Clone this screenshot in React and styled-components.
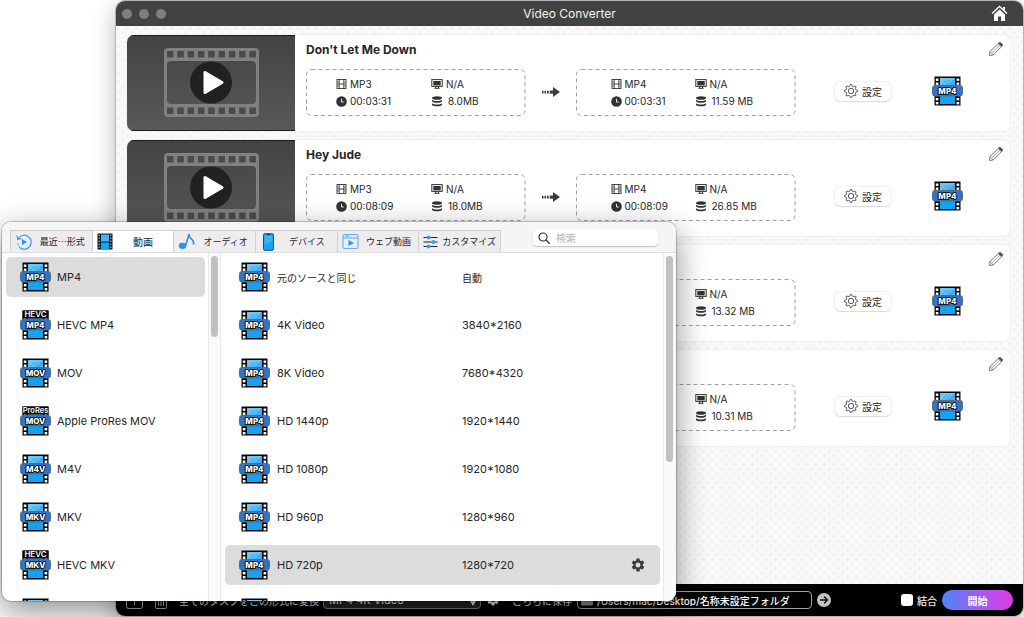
import React, {useState} from 'react';
import styled, {createGlobalStyle, css} from 'styled-components';
import {MdSettings} from 'react-icons/md';

const GlobalStyle = createGlobalStyle`
    * {
        box-sizing: border-box;
    }
    body {
        margin: 0;
        background-color: #fff;
        color: #262626;
        font-family: Inter, "Noto Sans CJK JP", sans-serif;
        font-size: 11px;
        overflow: hidden;
    }
    button, input, select {
        font-family: inherit;
        color: inherit;
        margin: 0;
        padding: 0;
        border: 0;
        background: none;
    }
    svg {
        display: block;
        flex: none;
    }
`;

const Page = styled.div`
    position: relative;
    display: flex;
    height: 100vh;
    padding: 1px 1px 1px 116px;
`;

const Window = styled.main`
    flex: 1;
    min-width: 0;
    display: flex;
    flex-direction: column;
    border-radius: 9px;
    overflow: hidden;
    box-shadow: 0 0 0 1px #b4b4b4, 0 8px 24px rgba(0, 0, 0, .3);
`;

const TitleBar = styled.header`
    height: 25px;
    flex: none;
    display: grid;
    grid-template-columns: 1fr auto 1fr;
    align-items: center;
    padding: 0 6px;
    background-color: #424242;
    color: #f2f2f2;
    h1 {
        margin: 0;
        font-size: 12px;
        font-weight: 400;
    }
`;

const Lights = styled.div`
    display: flex;
    gap: 7px;
    span {
        width: 10px;
        height: 10px;
        border-radius: 50%;
        background-color: #7e7e7e;
    }
`;

const HomeButton = styled.button`
    justify-self: end;
    margin-right: 9px;
`;

const TaskList = styled.section`
    flex: 1;
    min-height: 0;
    overflow: hidden;
    display: flex;
    flex-direction: column;
    gap: 9px;
    padding: 9px 13px 0 11px;
    background-color: #f9f9f9;
    background-image:
        radial-gradient(circle at 25% 25%, #f1f1f1 1px, transparent 2px),
        radial-gradient(circle at 75% 75%, #f1f1f1 1px, transparent 2px);
    background-size: 9px 9px;
`;

const Card = styled.article`
    flex: none;
    height: 96px;
    display: flex;
    border-radius: 7px;
    overflow: hidden;
    background-color: #fff;
    box-shadow: 0 0 0 1px #f0f0f0;
`;

const Info = styled.div`
    flex: 1;
    min-width: 0;
    padding: 7px 0 0 11px;
    h2 {
        margin: 0 0 11px;
        height: 16px;
        line-height: 16px;
        font-size: 12px;
        font-weight: 700;
    }
`;

const Conversion = styled.div`
    display: flex;
    align-items: center;
    gap: 15px;
`;

const MediaBox = styled.div`
    position: relative;
    flex: 1 1 200px;
    height: 47px;
    display: grid;
    grid-template-columns: ${({$target}) => $target ? '84px 1fr' : '95px 1fr'};
    grid-template-rows: 17px 17px;
    align-content: center;
    padding-left: ${({$target}) => $target ? '35px' : '30px'};
    font-size: 10px;
`;

const DashFrame = styled.svg`
    position: absolute;
    left: 0;
    top: 0;
    width: calc(100% - 1px);
    height: 100%;
    overflow: visible;
`;

const Fact = styled.span`
    display: flex;
    align-items: center;
    gap: ${({$wide}) => $wide ? '5px' : '3px'};
    white-space: nowrap;
`;

const Actions = styled.div`
    display: grid;
    grid-template-columns: 56px 31px 18px;
    column-gap: 41px;
    align-items: center;
    padding: 16px 0 0 40px;
    width: 215px;
`;

const SettingsButton = styled.button`
    height: 19px;
    display: flex;
    align-items: center;
    justify-content: center;
    gap: 4px;
    border-radius: 5px;
    background-color: #fff;
    box-shadow: 0 0 2px rgba(0, 0, 0, .2), 0 1px 1px rgba(0, 0, 0, .1);
    font-size: 10px;
`;

const EditColumn = styled.div`
    display: flex;
    align-items: flex-start;
    width: 22px;
    margin-left: -22px;
    padding-top: 6px;
`;

const Footer = styled.footer`
    height: 32px;
    flex: none;
    display: flex;
    align-items: center;
    padding: 0 10px;
    background-color: #000;
    color: #e8e8e8;
    font-size: 10px;
    white-space: nowrap;
`;

const FooterIcon = styled.button`
    margin-right: 12px;
`;

const FormatSelect = styled.select`
    width: 158px;
    height: 17px;
    margin: 0 5px 0 4px;
    padding: 0 16px 0 5px;
    appearance: none;
    border: 1px solid #777;
    border-radius: 4px;
    background: #222 url("data:image/svg+xml,%3Csvg xmlns='http://www.w3.org/2000/svg' width='6' height='5'%3E%3Cpath d='M0 0h6L3 5z' fill='%23ddd'/%3E%3C/svg%3E") no-repeat right 4px top 8px;
    color: #eee;
    font-size: 11px;
`;

const PathBox = styled.div`
    flex: 0 1 235px;
    min-width: 60px;
    height: 18px;
    display: flex;
    align-items: center;
    gap: 4px;
    margin: 0 5px;
    padding: 0 3px;
    border: 1px solid #a5a5a5;
    border-radius: 4px;
    input {
        flex: 1;
        min-width: 0;
        outline: 0;
        color: #fff;
        font-size: 10px;
        font-weight: 500;
    }
`;

const MergeLabel = styled.label`
    display: flex;
    align-items: center;
    gap: 4px;
    margin: 0 5px 0 auto;
    font-weight: 500;
    input {
        appearance: none;
        width: 12px;
        height: 12px;
        border-radius: 3px;
        background-color: #fff;
    }
    input:checked {
        background-color: #4c8dff;
    }
`;

const StartButton = styled.button`
    width: 71px;
    height: 20px;
    border-radius: 10px;
    background-image: linear-gradient(90deg, #4a86ff, #a05cf0 50%, #e03be4);
    color: #fff;
    font-size: 10px;
    font-weight: 700;
`;

const Popup = styled.section`
    position: absolute;
    left: 2px;
    top: 222px;
    bottom: 16px;
    width: 674px;
    max-width: calc(100vw - 4px);
    display: flex;
    flex-direction: column;
    border-radius: 9px;
    overflow: hidden;
    background-color: #fff;
    box-shadow: 0 0 0 1px rgba(0, 0, 0, .2), 0 10px 32px rgba(0, 0, 0, .45);
`;

const PopupHead = styled.div`
    height: 31px;
    flex: none;
    display: flex;
    align-items: flex-end;
    justify-content: space-between;
    padding: 0 18px 0 8px;
    border-bottom: 1px solid #ddd;
    background-color: #f5f5f5;
`;

const Tabs = styled.div`
    flex: 0 1 491px;
    min-width: 0;
    display: flex;
    height: 23px;
    margin-bottom: -1px;
    border: 1px solid #d0d0d0;
    border-bottom-color: #ddd;
`;

const Tab = styled.button`
    flex: 1;
    min-width: 0;
    display: flex;
    align-items: center;
    padding-left: 4px;
    background-color: ${({$active}) => $active ? '#fff' : '#eeecee'};
    font-size: ${({$small}) => $small ? '9px' : '10px'};
    white-space: nowrap;
    & + & {
        border-left: 1px solid #d0d0d0;
    }
    span {
        flex: 1;
        text-align: center;
    }
`;

const SearchBox = styled.label`
    width: 125px;
    height: 17px;
    margin-bottom: 6px;
    display: flex;
    align-items: center;
    gap: 6px;
    padding-left: 5px;
    border-radius: 4px;
    background-color: #fff;
    box-shadow: 0 1px 1px rgba(0, 0, 0, .2), 0 0 1px rgba(0, 0, 0, .15);
    input {
        flex: 1;
        min-width: 0;
        outline: 0;
        font-size: 10px;
    }
    input::placeholder {
        color: #b5b5b5;
    }
`;

const PopupBody = styled.div`
    flex: 1;
    min-height: 0;
    display: grid;
    grid-template-columns: 206px 13px minmax(0, 1fr) 13px;
`;

const List = styled.ul`
    min-height: 0;
    margin: 0;
    padding: 4px 3px 0 4px;
    overflow: hidden;
    list-style: none;
`;

const rowBase = css`
    height: 40px;
    margin-bottom: 8px;
    align-items: center;
    border-radius: 5px;
    background-color: ${({$selected}) => $selected ? '#dcdcdc' : 'transparent'};
    text-align: left;
    font-size: 11px;
`;

const FormatRow = styled.button`
    ${rowBase}
    width: 100%;
    display: flex;
    gap: 6px;
    padding-left: 14px;
`;

const PresetRow = styled.div`
    ${rowBase}
    display: grid;
    grid-template-columns: 31px 178px 1fr 30px;
    column-gap: 7px;
    padding-left: 14px;
`;

const RowText = styled.span`
    font-size: ${({$jp}) => $jp ? '10px' : '11px'};
`;

const Track = styled.div`
    padding: 3px 3px 0 2px;
    border: solid #e8e8e8;
    border-width: 0 1px;
    background-color: #fafafa;
    &:last-child {
        border-right: 0;
    }
`;

const Thumb = styled.div`
    width: 7px;
    height: ${({$length}) => $length};
    border-radius: 4px;
    background-color: #c1c1c1;
`;

const tasks = [
    {title: "Don't Let Me Down", time: '00:03:31', from: '8.0MB', to: '11.59 MB'},
    {title: 'Hey Jude', time: '00:08:09', from: '18.0MB', to: '26.85 MB'},
    {title: '', time: '', from: '', to: '13.32 MB'},
    {title: '', time: '', from: '', to: '10.31 MB'},
];

const formats = [
    {name: 'MP4', badge: 'MP4'},
    {name: 'HEVC MP4', badge: 'MP4', top: 'HEVC'},
    {name: 'MOV', badge: 'MOV'},
    {name: 'Apple ProRes MOV', badge: 'MOV', top: 'ProRes'},
    {name: 'M4V', badge: 'M4V'},
    {name: 'MKV', badge: 'MKV'},
    {name: 'HEVC MKV', badge: 'MKV', top: 'HEVC'},
    {name: '', badge: ''},
];

const presets = [
    {name: '元のソースと同じ', size: '自動', badge: 'MP4', jp: true},
    {name: '4K Video', size: '3840*2160', badge: 'MP4'},
    {name: '8K Video', size: '7680*4320', badge: 'MP4'},
    {name: 'HD 1440p', size: '1920*1440', badge: 'MP4'},
    {name: 'HD 1080p', size: '1920*1080', badge: 'MP4'},
    {name: 'HD 960p', size: '1280*960', badge: 'MP4'},
    {name: 'HD 720p', size: '1280*720', badge: 'MP4'},
    {name: '', size: '', badge: ''},
];

const FormatIcon = ({badge, top}) => (
    <svg width="31" height="30" viewBox="0 0 31 30">
        <rect x="2.5" y="0.5" width="26" height="29" fill="#050505"/>
        {[3.8, 24.6].map(x => [2.5, 6.5, 22, 26].map(y => (
            <rect key={`${x}-${y}`} x={x} y={y} width="2.600" height="2.400" fill="#fff"/>
        )))}
        <rect x="8" y="2" width="15" height="12" fill="#3daef5"/>
        <path d="M8 2h15L11 12H8z" fill="#6cc5f8"/>
        <path d="M10 9l5-5M12.500 9.500l6-6" stroke="#2ba3ee" strokeWidth="1"/>
        <rect x="8" y="20" width="15" height="8" fill="#10a4f5"/>
        {top && <rect x="2.500" y="0.500" width="26" height="8" fill="#050505"/>}
        {top && (
            <text x="15.500" y="7" textAnchor="middle" fontSize={top.length > 4 ? 7.5 : 8}
                fontWeight="600" fill="#fff">{top}</text>
        )}
        <rect x="0.500" y="9.500" width="30" height="10.500" rx="2.500" fill="#2f74c8" stroke="#5d6a78"/>
        <text x="15.500" y="17.600" textAnchor="middle" fontSize="8" fontWeight="800" fill="#fff"
            stroke="#000" strokeWidth="1.700" strokeLinejoin="round" paintOrder="stroke">{badge}</text>
    </svg>
);

const TaskThumb = () => (
    <svg width="168" height="96" viewBox="0 0 168 96">
        <defs>
            <linearGradient id="thumb" x1="0" y1="0" x2="0" y2="1">
                <stop offset="0" stopColor="#434343"/>
                <stop offset="1" stopColor="#58595b"/>
            </linearGradient>
        </defs>
        <rect width="168" height="96" fill="url(#thumb)"/>
        <path d="M0 .5h168M0 95.500h168" stroke="#1e1e1e"/>
        <path fillRule="evenodd" fill="#808080"
            d="M41 13h87a4 4 0 0 1 4 4v61a4 4 0 0 1-4 4H41a4 4 0 0 1-4-4V17a4 4 0 0 1 4-4zM44 26a4 4 0 0 0-4 4v35a4 4 0 0 0 4 4h81a4 4 0 0 0 4-4V30a4 4 0 0 0-4-4z"/>
        {[...Array(9)].map((_, i) => (
            <g key={i} fill="#4a4a4b">
                <rect x={40 + i * 10.3} y="16" width="6.500" height="6.500"/>
                <rect x={40 + i * 10.3} y="72.500" width="6.500" height="6.500"/>
            </g>
        ))}
        <circle cx="84" cy="47.500" r="21" fill="#212122"/>
        <path d="M78 37.500v20l17-10z" fill="#fff" stroke="#fff" strokeWidth="3" strokeLinejoin="round"/>
    </svg>
);

const HomeIcon = () => (
    <svg width="17" height="17" viewBox="0 0 17 17" fill="none">
        <path d="M1 8.500L8.500 1.500 16 8.500" stroke="#fff" strokeWidth="1.400"/>
        <path d="M12 2h2v4l-2-2z" fill="#fff"/>
        <path d="M8.500 4.500L14 9.600V16h-4v-4.500H7V16H3V9.600z" fill="#fff"/>
    </svg>
);

const PencilIcon = () => (
    <svg width="16" height="16" viewBox="0 0 16 16" fill="none" stroke="#666" strokeLinejoin="round">
        <path d="M2 10.500L11 1.800l3.200 3.200L5.200 14 1.500 14.500z" fill="#fff" strokeWidth=".9"/>
        <path d="M3.600 12.200L12.500 3.400M2 10.500L5.200 14" strokeWidth=".6"/>
        <path d="M10.300 2.500L12 1l3 2.800-1.600 1.900z" fill="#4a4a4a" strokeWidth=".6"/>
    </svg>
);

const FilmIcon = () => (
    <svg width="11" height="10" viewBox="0 0 11 10" fill="none" stroke="#333">
        <rect x="1" y=".5" width="9" height="9" strokeWidth=".9"/>
        <path d="M3.200 .5v9M7.800 .5v9M3 5h5" strokeWidth=".9"/>
        <path d="M1 3h2M1 5h2M1 7h2M8 3h2M8 5h2M8 7h2" strokeWidth=".6"/>
    </svg>
);

const ClockIcon = () => (
    <svg width="11" height="11" viewBox="0 0 11 11">
        <circle cx="5.500" cy="5.500" r="5.300" fill="#333"/>
        <path d="M5.500 2.800V6h2.200" fill="none" stroke="#fff" strokeWidth=".9"/>
    </svg>
);

const MonitorIcon = () => (
    <svg width="12" height="10" viewBox="0 0 12 10">
        <rect x=".8" y=".6" width="10.400" height="6.800" fill="#fff" stroke="#333"/>
        <rect x="2.300" y="2" width="7.400" height="4.400" fill="#333"/>
        <path d="M3.500 9.300h5M4.500 7.500v1.500M7.500 7.500v1.500" stroke="#333"/>
    </svg>
);

const DiskIcon = () => (
    <svg width="12" height="11" viewBox="0 0 12 11" fill="#333">
        <ellipse cx="6" cy="2" rx="5" ry="1.800"/>
        <path d="M1 3.700c1.500 1.800 8.500 1.800 10 0v1.600c-1 2-9 2-10 0zM1 7.200c1.500 1.800 8.500 1.800 10 0v1.600c-1 2-9 2-10 0z"/>
    </svg>
);

const ArrowIcon = () => (
    <svg width="20" height="12" viewBox="0 0 20 12" fill="#3c3c3c">
        <path d="M1 3.800h1.500v2.700H1zM3.500 3.800H5v2.700H3.500zM6 3.800h1.800v2.700H6zM8.800 3.500H12V0l7 5-7 5V6.700H8.800z"/>
    </svg>
);

const gearPoints = [...Array(32)].map((_, i) => {
    const radius = i % 4 < 2 ? 6.5 : 4.9;
    const angle = (i - .5) * Math.PI / 16;
    return `${7 + radius * Math.cos(angle)},${7 + radius * Math.sin(angle)}`;
}).join(' ');

const GearIcon = () => (
    <svg width="14" height="14" viewBox="0 0 14 14" fill="none" stroke="#444" strokeWidth=".9">
        <polygon points={gearPoints} strokeLinejoin="round"/>
        <circle cx="7" cy="7" r="2.700"/>
    </svg>
);

const RecentIcon = () => (
    <svg width="18" height="18" viewBox="0 0 18 18" fill="none" stroke="#3a9ff0" strokeWidth="1.200">
        <path d="M3 6A7 7 0 1 1 5 14.800"/>
        <path d="M3 10.500a7 7 0 0 0 2 4.300" strokeDasharray="1.500 1.500"/>
        <path d="M2 2.500L2.700 6.500 6.500 5.500"/>
        <path d="M7 6v6l5-3z" fill="#1b9af5" stroke="none"/>
    </svg>
);

const VideoIcon = () => (
    <svg width="16" height="17" viewBox="0 0 16 17">
        <rect x=".5" y=".5" width="15" height="16" fill="#0a1a2a"/>
        <rect x="4" y="1.500" width="8" height="7" fill="#49b3f6"/>
        <rect x="4" y="9.500" width="8" height="6.500" fill="#12a5f5"/>
        <path d="M2.200 1.500v14M13.800 1.500v14" stroke="#9fb4c4" strokeWidth="1.200" strokeDasharray="1.400 1.600"/>
    </svg>
);

const NoteIcon = () => (
    <svg width="18" height="17" viewBox="0 0 18 17" fill="none" stroke="#2a8fe8" strokeWidth="1.600">
        <ellipse cx="4.500" cy="12.800" rx="3" ry="2.300" fill="#1d9bf5"/>
        <path d="M7.500 12.500L11 1.500c.2 3 1.600 3.800 3 5s2 2.500 1.500 5" strokeLinejoin="round"/>
    </svg>
);

const PhoneIcon = () => (
    <svg width="17" height="18" viewBox="0 0 17 18">
        <rect x="3.500" y=".7" width="10" height="16.600" rx="1.500" fill="#18a4f5" stroke="#1e4a70"/>
        <path d="M4.500 3h8v5l-8 4z" fill="#3fb0f6"/>
        <path d="M7 1.500h3" stroke="#12304a"/>
    </svg>
);

const WebIcon = () => (
    <svg width="17" height="15" viewBox="0 0 17 15" fill="none" stroke="#54a8f3">
        <rect x="1" y=".6" width="15" height="13.800" rx="1"/>
        <path d="M1 4h15M3 2.300h4"/>
        <path d="M6.500 6l5.500 3-5.500 3z" fill="#1b9af5" stroke="none"/>
    </svg>
);

const SlidersIcon = () => (
    <svg width="15" height="14" viewBox="0 0 15 14">
        <path d="M.5 2.500h14M.5 7h14M.5 11.500h14" stroke="#222" strokeWidth="1.200"/>
        <circle cx="5.500" cy="2.500" r="1.900" fill="#2aa5f5"/>
        <circle cx="10.500" cy="7" r="1.900" fill="#2aa5f5"/>
        <circle cx="5.500" cy="11.500" r="1.900" fill="#2aa5f5"/>
    </svg>
);

const SearchIcon = () => (
    <svg width="12" height="12" viewBox="0 0 12 12" fill="none" stroke="#333" strokeWidth="1.200">
        <circle cx="5" cy="5" r="4"/>
        <path d="M8 8l3.500 3.500" strokeLinecap="round"/>
    </svg>
);

const AddIcon = () => (
    <svg width="17" height="17" viewBox="0 0 17 17" fill="none" stroke="#aaa">
        <rect x=".5" y=".5" width="16" height="16" rx="2"/>
        <path d="M8.500 4v9M4 8.500h9"/>
    </svg>
);

const TrashIcon = () => (
    <svg width="12" height="17" viewBox="0 0 12 17" fill="none" stroke="#aaa">
        <path d="M.5 4h11M4 4V1.500h4V4M.5 4v11.500a1 1 0 0 0 1 1h9a1 1 0 0 0 1-1V4M3.500 7v7M6 7v7M8.500 7v7"/>
    </svg>
);

const FolderIcon = () => (
    <svg width="12" height="11" viewBox="0 0 12 11" fill="#8c8c8c">
        <path d="M1.500.5h3l1.500 1.500h4.500a1.500 1.500 0 0 1 1.500 1.500v5.500a1.500 1.500 0 0 1-1.500 1.500h-9A1.500 1.500 0 0 1 0 9V2A1.500 1.500 0 0 1 1.500.5z"/>
    </svg>
);

const GoIcon = () => (
    <svg width="14" height="14" viewBox="0 0 14 14">
        <circle cx="7" cy="7" r="7" fill="#c4c4c4"/>
        <path d="M3 7h7M7 3.500L10.500 7 7 10.500" fill="none" stroke="#111" strokeWidth="1.400"/>
    </svg>
);

const tabs = [
    {label: '最近⋯形式', icon: <RecentIcon/>, small: true},
    {label: '動画', icon: <VideoIcon/>},
    {label: 'オーディオ', icon: <NoteIcon/>, small: true},
    {label: 'デバイス', icon: <PhoneIcon/>, small: true},
    {label: 'ウェブ動画', icon: <WebIcon/>, small: true},
    {label: 'カスタマイズ', icon: <SlidersIcon/>, small: true},
];

const Media = ({format, time, size, target}) => (
    <MediaBox $target={target}>
        <DashFrame>
            <rect x=".5" y=".5" width="100%" height="46" rx="5" fill="none"
                stroke="#a0a0a0" strokeDasharray="4 3"/>
        </DashFrame>
        <Fact><FilmIcon/>{format}</Fact>
        <Fact><MonitorIcon/>N/A</Fact>
        <Fact><ClockIcon/>{time}</Fact>
        <Fact $wide><DiskIcon/>{size}</Fact>
    </MediaBox>
);

const Task = ({task}) => (
    <Card>
        <TaskThumb/>
        <Info>
            <h2>{task.title}</h2>
            <Conversion>
                <Media format="MP3" time={task.time} size={task.from}/>
                <ArrowIcon/>
                <Media format="MP4" time={task.time} size={task.to} target/>
            </Conversion>
        </Info>
        <Actions>
            <SettingsButton type="button"><GearIcon/>設定</SettingsButton>
            <FormatIcon badge="MP4"/>
        </Actions>
        <EditColumn>
            <button type="button" aria-label="edit"><PencilIcon/></button>
        </EditColumn>
    </Card>
);

function FormatPopup() {
    const [tab, setTab] = useState(1);
    const [format, setFormat] = useState(0);
    const [preset, setPreset] = useState(6);

    return (
        <Popup>
            <PopupHead>
                <Tabs role="tablist">
                    {tabs.map(({label, icon, small}, i) => (
                        <Tab key={label} type="button" role="tab" aria-selected={tab === i}
                            $active={tab === i} $small={small} onClick={() => setTab(i)}>
                            {icon}
                            <span>{label}</span>
                        </Tab>
                    ))}
                </Tabs>
                <SearchBox>
                    <SearchIcon/>
                    <input type="text" placeholder="検索" aria-label="検索"/>
                </SearchBox>
            </PopupHead>
            <PopupBody>
                <List>
                    {formats.map(({name, badge, top}, i) => (
                        <li key={i}>
                            <FormatRow type="button" $selected={format === i} onClick={() => setFormat(i)}>
                                <FormatIcon badge={badge} top={top}/>
                                {name}
                            </FormatRow>
                        </li>
                    ))}
                </List>
                <Track><Thumb $length="81px"/></Track>
                <List>
                    {presets.map(({name, size, badge, jp}, i) => (
                        <li key={i}>
                            <PresetRow $selected={preset === i} onClick={() => setPreset(i)}>
                                <FormatIcon badge={badge}/>
                                <RowText $jp={jp}>{name}</RowText>
                                <RowText $jp={jp}>{size}</RowText>
                                {preset === i && (
                                    <button type="button" aria-label="settings">
                                        <MdSettings size={16} color="#3c3c3c"/>
                                    </button>
                                )}
                            </PresetRow>
                        </li>
                    ))}
                </List>
                <Track><Thumb $length="206px"/></Track>
            </PopupBody>
        </Popup>
    );
}

function App() {
    const [merge, setMerge] = useState(false);
    const [path, setPath] = useState('/Users/mac/Desktop/名称未設定フォルダ');

    return (
        <Page>
            <GlobalStyle/>
            <Window>
                <TitleBar>
                    <Lights><span/><span/><span/></Lights>
                    <h1>Video Converter</h1>
                    <HomeButton type="button" aria-label="home"><HomeIcon/></HomeButton>
                </TitleBar>
                <TaskList>
                    {tasks.map((task, i) => <Task key={i} task={task}/>)}
                </TaskList>
                <Footer>
                    <FooterIcon type="button" aria-label="add"><AddIcon/></FooterIcon>
                    <FooterIcon type="button" aria-label="delete"><TrashIcon/></FooterIcon>
                    <label htmlFor="format">全てのタスクをこの形式に変換</label>
                    <FormatSelect id="format">
                        <option>MP4 4K Video</option>
                    </FormatSelect>
                    <FooterIcon type="button" aria-label="settings"><MdSettings size={14}/></FooterIcon>
                    <label htmlFor="path">こちらに保存</label>
                    <PathBox>
                        <FolderIcon/>
                        <input id="path" type="text" value={path} onChange={e => setPath(e.target.value)}/>
                    </PathBox>
                    <button type="button" aria-label="open"><GoIcon/></button>
                    <MergeLabel>
                        <input type="checkbox" checked={merge} onChange={e => setMerge(e.target.checked)}/>
                        結合
                    </MergeLabel>
                    <StartButton type="button">開始</StartButton>
                </Footer>
            </Window>
            <FormatPopup/>
        </Page>
    );
}

export default App;
